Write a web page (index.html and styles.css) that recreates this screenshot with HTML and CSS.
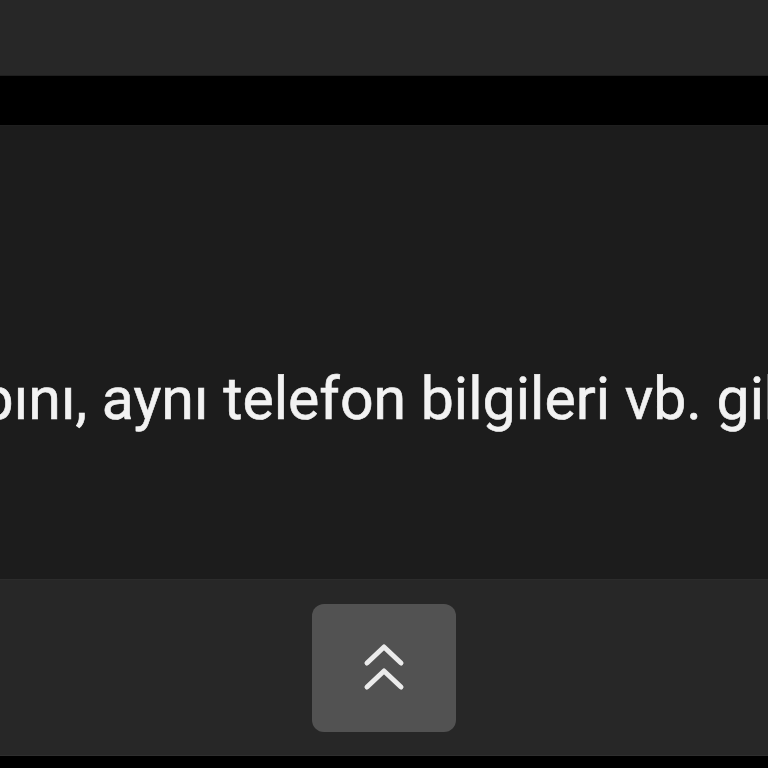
FILE: index.html
```html
<!DOCTYPE html>
<html lang="tr">

<head>
    <meta charset="UTF-8">
    <meta name="viewport" content="width=device-width, initial-scale=1.0">
    <title>Document</title>
    <link rel="stylesheet" href="styles.css">
</head>

<body>
    <div class="container">
        <div class="top-bar"></div>
        <div class="spacer"></div>

        <div class="panel">
            <p class="caption">yapını, aynı telefon bilgileri vb. gibi</p>
        </div>

        <div class="bottom-bar">
            <button class="up-btn" id="upBtn">
                <svg width="44" height="52" viewBox="0 0 44 52" fill="none" stroke="#ebebeb" stroke-width="5"
                    stroke-linecap="round" stroke-linejoin="round">
                    <polyline points="5,21 22,5 39,21" />
                    <polyline points="5,45 22,29 39,45" />
                </svg>
            </button>
        </div>
    </div>
</body>

</html>
```

FILE: styles.css
```css
* {
    margin: 0;
    padding: 0;
    box-sizing: border-box;
}

html,
body {
    background-color: #000;
    font-family: Roboto, "Noto Sans", sans-serif;
}

.container {
    height: 768px;
    display: flex;
    flex-direction: column;
}

.top-bar {
    height: 76px;
    background-color: #272727;
    border-bottom: 1px solid #1e1e1e;
}

.spacer {
    height: 49px;
    background-color: #000;
}

.panel {
    height: 454px;
    background-color: #1c1c1c;
    border-top: 1px solid #1f1f1f;
    overflow: hidden;
    padding-top: 243px;
}

.caption {
    font-size: 59px;
    line-height: 1;
    color: #f2f2f2;
    white-space: nowrap;
    margin-left: -79px;
    -webkit-text-stroke: 0.6px #f2f2f2;
}

.bottom-bar {
    height: 177px;
    background-color: #272727;
    border-top: 1px solid #2c2c2c;
    border-bottom: 1px solid #2e2e2e;
    display: flex;
    align-items: center;
    justify-content: center;
}

.up-btn {
    width: 144px;
    height: 128px;
    border: none;
    border-radius: 12px;
    background-color: #525252;
    display: flex;
    align-items: center;
    justify-content: center;
    cursor: pointer;
}
```
